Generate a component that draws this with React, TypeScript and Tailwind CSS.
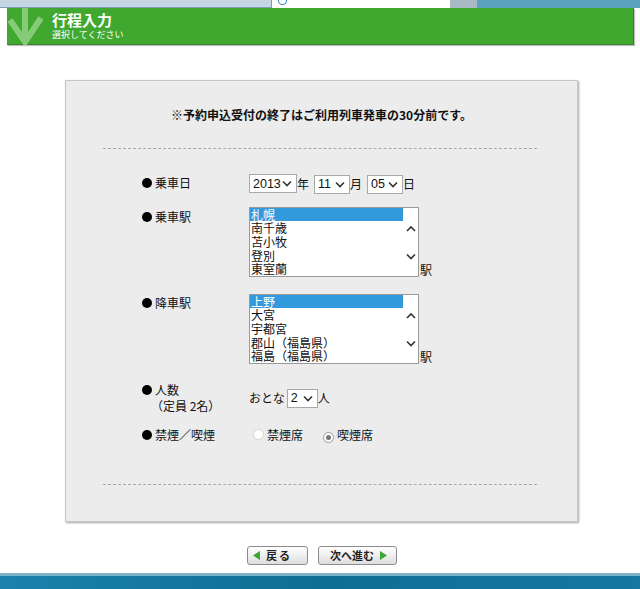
import React from "react";

const jp = "font-['Noto_Sans_CJK_JP',sans-serif]";

const Chevron = ({ up = false }: { up?: boolean }) => (
  <svg width="10" height="7" viewBox="0 0 10 7" className="block">
    <polyline
      points={up ? "1,6 5,2 9,6" : "1,1.5 5,5.5 9,1.5"}
      fill="none"
      stroke="#333"
      strokeWidth="1.6"
    />
  </svg>
);

const Select = ({ value, width }: { value: string; width: string }) => (
  <span
    className={`inline-flex items-center justify-between h-[19px] border border-[#a9a9a9] bg-white pl-[3px] pr-[4px] ${width}`}
  >
    <span className="font-['Liberation_Sans',sans-serif] text-[12.5px] leading-none text-[#111]">
      {value}
    </span>
    <Chevron />
  </span>
);

const ListBox = ({ items }: { items: string[] }) => (
  <div className="flex w-[170px] h-[70px] border border-[#9a9a9a] bg-white">
    <div className="w-[153px]">
      {items.map((s, i) => (
        <div
          key={s}
          className={`h-[13.6px] leading-[13.6px] text-[12px] pl-[1px] ${
            i === 0 ? "bg-[#3399dd] text-white" : "text-[#111]"
          }`}
        >
          {s}
        </div>
      ))}
    </div>
    <div className="flex-1 flex flex-col items-center justify-between pt-[17px] pb-[16px]">
      <Chevron up />
      <Chevron />
    </div>
  </div>
);

const Label = ({ children }: { children: React.ReactNode }) => (
  <div className="flex items-start text-[12px] leading-[16px] text-[#111]">
    <span className="w-[10px] h-[10px] rounded-full bg-black mt-[3px] mr-[3px] shrink-0" />
    <div>{children}</div>
  </div>
);

const Radio = ({ checked, disabled }: { checked?: boolean; disabled?: boolean }) => (
  <span
    className={`inline-flex items-center justify-center w-[11px] h-[11px] rounded-full border bg-white ${
      disabled ? "border-[#d4d4d4]" : "border-[#9a9a9a]"
    }`}
  >
    {checked && <span className="w-[5px] h-[5px] rounded-full bg-[#777]" />}
  </span>
);

const Tri = ({ left = false }: { left?: boolean }) => (
  <svg width="7" height="9" viewBox="0 0 7 9" className="block">
    <polygon points={left ? "7,0 0,4.5 7,9" : "0,0 7,4.5 0,9"} fill="#3fa535" />
  </svg>
);

export default function App() {
  return (
    <div className={`w-[640px] h-[589px] flex flex-col bg-white overflow-hidden ${jp}`}>
      {/* browser strip */}
      <div className="flex h-[8px] shrink-0">
        <div className="w-[272px] bg-[#c3d6e2] border-b border-[#7d9cb1] border-r" />
        <div className="w-[178px] bg-white flex items-start pl-[6px]">
          <span className="w-[9px] h-[5px] rounded-b-full border border-t-0 border-[#3a83c8]" />
        </div>
        <div className="w-[27px] bg-[#a9b9c4]" />
        <div className="flex-1 bg-[#5ba2bf]" />
      </div>

      {/* header */}
      <div className="ml-[7px] w-[627px] h-[37px] shrink-0 flex items-start bg-[#40a72f] border-b border-r border-[#3b7f34] shadow-[1px_1px_1px_rgba(0,0,0,0.25)]">
        <svg width="40" height="37" viewBox="0 0 40 37" className="block shrink-0">
          <g stroke="#86cc78" strokeWidth="6" fill="none" strokeLinejoin="miter">
            <line x1="18" y1="0" x2="18" y2="34" />
            <polyline points="3,12 18,34 34,10" />
          </g>
        </svg>
        <div className="ml-[5px] pt-[3px] text-white">
          <div className="text-[15px] leading-[18px] font-bold">行程入力</div>
          <div className="text-[9px] leading-[11px]">選択してください</div>
        </div>
      </div>

      {/* panel */}
      <div className="mt-[35px] ml-[65px] w-[513px] h-[442px] shrink-0 bg-[#ececec] border border-[#c6c6c6] shadow-[1px_1px_2px_rgba(0,0,0,0.35)] flex flex-col">
        <div className="pt-[26px] text-center text-[12px] leading-[16px] font-bold text-[#111]">
          ※予約申込受付の終了はご利用列車発車の30分前です。
        </div>
        <div className="mt-[25px] ml-[37px] mr-[40px] border-t border-dashed border-[#a8a8a8]" />

        <div className="pl-[76px] grid grid-cols-[107px_auto] items-start">
          {/* 乗車日 */}
          <div className="mt-[25px] pt-[1px]">
            <Label>乗車日</Label>
          </div>
          <div className="mt-[25px] flex items-center text-[12px] text-[#111]">
            <Select value="2013" width="w-[48px]" />
            <span>年</span>
            <span className="ml-[5px]"><Select value="11" width="w-[36px]" /></span>
            <span>月</span>
            <span className="ml-[5px]"><Select value="05" width="w-[36px]" /></span>
            <span>日</span>
          </div>

          {/* 乗車駅 */}
          <div className="mt-[13px] pt-[2px]">
            <Label>乗車駅</Label>
          </div>
          <div className="mt-[13px] flex items-end text-[12px] text-[#111]">
            <ListBox items={["札幌", "南千歳", "苫小牧", "登別", "東室蘭"]} />
            <span className="leading-[14px] ml-[1px]">駅</span>
          </div>

          {/* 降車駅 */}
          <div className="mt-[17px] pt-[1px]">
            <Label>降車駅</Label>
          </div>
          <div className="mt-[17px] flex items-end text-[12px] text-[#111]">
            <ListBox items={["上野", "大宮", "宇都宮", "郡山（福島県）", "福島（福島県）"]} />
            <span className="leading-[14px] ml-[1px]">駅</span>
          </div>

          {/* 人数 */}
          <div className="mt-[18px]">
            <Label>
              人数
              <div className="-ml-[4px]">（定員 2名）</div>
            </Label>
          </div>
          <div className="mt-[18px] h-[32px] flex items-center text-[12px] text-[#111] pt-[1px]">
            <span>おとな</span>
            <span className="ml-[2px]"><Select value="2" width="w-[31px]" /></span>
            <span>人</span>
          </div>

          {/* 禁煙／喫煙 */}
          <div className="mt-[13px]">
            <Label>禁煙／喫煙</Label>
          </div>
          <div className="mt-[13px] flex items-center h-[16px] text-[12px] text-[#111]">
            <span className="ml-[4px]"><Radio disabled /></span>
            <span className="ml-[3px]">禁煙席</span>
            <span className="ml-[20px]"><Radio checked /></span>
            <span className="ml-[3px]">喫煙席</span>
          </div>
        </div>

        <div className="mt-[41px] ml-[37px] mr-[40px] border-t border-dashed border-[#a8a8a8]" />
      </div>

      {/* buttons */}
      <div className="mt-[24px] ml-[247px] flex items-center gap-[10px] shrink-0">
        <button className="flex items-center h-[19px] w-[61px] pl-[5px] border border-[#8c8c8c] rounded-[3px] bg-linear-to-b from-white to-[#dedede] text-[11px] font-bold text-[#222]">
          <Tri left />
          <span className="ml-[6px] tracking-[2px]">戻る</span>
        </button>
        <button className="flex items-center h-[19px] w-[79px] pl-[11px] border border-[#8c8c8c] rounded-[3px] bg-linear-to-b from-white to-[#dedede] text-[11px] font-bold text-[#222]">
          <span>次へ進む</span>
          <span className="ml-[6px]"><Tri /></span>
        </button>
      </div>

      {/* taskbar */}
      <div className="mt-auto h-[16px] shrink-0 flex flex-col">
        <div className="h-[3px] bg-[#7db3c6]" />
        <div className="flex-1 bg-linear-to-r from-[#1a82ab] via-[#0f6e94] to-[#1677a0]" />
      </div>
    </div>
  );
}
